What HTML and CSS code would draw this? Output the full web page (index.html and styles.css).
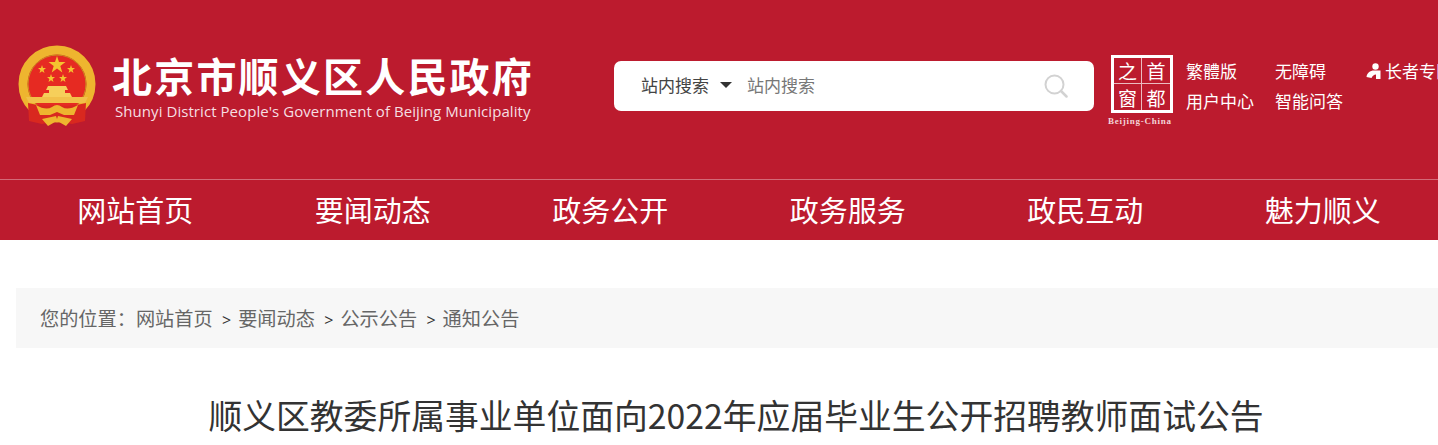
FILE: index.html
```html
<!DOCTYPE html>
<html lang="zh-CN">
<head>
    <meta charset="UTF-8">
    <meta name="viewport" content="width=device-width, initial-scale=1.0">
    <title>顺义区教委所属事业单位面向2022年应届毕业生公开招聘教师面试公告</title>
    <link rel="stylesheet" href="styles.css">
</head>
<body>
    <div class="header">
        <div class="top">
            <svg class="emblem" viewBox="0 0 80 84" aria-hidden="true">
                <circle cx="39" cy="39" r="34" fill="#e62a22" stroke="#eeb52f" stroke-width="9"/>
                <circle cx="39" cy="39" r="29" fill="none" stroke="#c98f1f" stroke-width="1"/>
                <polygon points="39,11 41,17 47.500,17 42.300,21 44.300,27.500 39,23.500 33.700,27.500 35.700,21 30.500,17 37,17" fill="#f4c430"/>
                <polygon points="24,20 25,23 28,23 25.600,25 26.500,28 24,26.200 21.500,28 22.400,25 20,23 23,23" fill="#f4c430"/>
                <polygon points="53,20 54,23 57,23 54.600,25 55.500,28 53,26.200 50.500,28 51.400,25 49,23 52,23" fill="#f4c430"/>
                <polygon points="33,29 34,32 37,32 34.600,34 35.500,37 33,35.200 30.500,37 31.400,34 29,32 32,32" fill="#f4c430"/>
                <polygon points="45,29 46,32 49,32 46.600,34 47.500,37 45,35.200 42.500,37 43.400,34 41,32 44,32" fill="#f4c430"/>
                <path d="M30 41 H48 L50 45 H47 V48 H52 L54 52 H24 L26 48 H31 V45 H28 Z" fill="#f6cf5a"/>
                <path d="M8 52 H70 L67 58 H11 Z" fill="#f2c04a"/>
                <path d="M10 58 Q24 62 39 60 Q54 62 68 58 L67 76 L54 79 L39 76 L24 79 L11 76 Z" fill="#d9281f"/>
                <path d="M18 60 Q28 66 34 62 Q39 58 44 62 Q50 66 60 60 L56 70 H46 L39 67 L32 70 H22 Z" fill="#eeb52f"/>
                <path d="M24 74 L38 71 L39 74 L40 71 L54 74 L48 81 L41 77 L37 77 L30 81 Z" fill="#eeb52f"/>
            </svg>
            <div class="logo-text">
                <div class="logo-cn">北京市顺义区人民政府</div>
                <div class="logo-en">Shunyi District People's Government of Beijing Municipality</div>
            </div>
            <div class="search">
                <span class="search-type">站内搜索</span>
                <span class="caret"></span>
                <span class="search-input">站内搜索</span>
                <svg class="search-icon" viewBox="0 0 24 24" aria-hidden="true">
                    <circle cx="10.500" cy="10.500" r="9" fill="none" stroke="#d2d2d2" stroke-width="2"/>
                    <path d="M17 17 L22.500 22.500" stroke="#d2d2d2" stroke-width="2.500" stroke-linecap="round"/>
                </svg>
            </div>
            <div class="stamp-wrap">
                <div class="stamp">
                    <span class="stamp-cell cell-a">之</span>
                    <span class="stamp-cell cell-b">首</span>
                    <span class="stamp-cell cell-c">窗</span>
                    <span class="stamp-cell cell-d">都</span>
                </div>
                <div class="stamp-label">Beijing-China</div>
            </div>
            <div class="quick-links">
                <a class="quick-link">繁體版</a>
                <a class="quick-link">无障碍</a>
                <a class="quick-link elder">
                    <svg class="elder-icon" viewBox="0 0 16 16" aria-hidden="true">
                        <circle cx="9.500" cy="3.500" r="3.200" fill="#fff"/>
                        <path d="M0.500 14 C1 10 4 7.500 8 7.500 L14.500 7.500 L14.500 16 L10 16 L10 11.500 C8 11.500 6.500 13 5.500 15 Z" fill="#fff"/>
                    </svg>长者专区
                </a>
                <a class="quick-link">用户中心</a>
                <a class="quick-link">智能问答</a>
            </div>
        </div>
        <div class="nav">
            <a class="nav-item">网站首页</a>
            <a class="nav-item">要闻动态</a>
            <a class="nav-item">政务公开</a>
            <a class="nav-item">政务服务</a>
            <a class="nav-item">政民互动</a>
            <a class="nav-item">魅力顺义</a>
        </div>
    </div>

    <div class="container">
        <div class="crumbs">
            <span>您的位置：</span><a>网站首页</a>
            <span class="sep">&gt;</span><a>要闻动态</a>
            <span class="sep">&gt;</span><a>公示公告</a>
            <span class="sep">&gt;</span><a>通知公告</a>
        </div>
        <h1 class="article-title">顺义区教委所属事业单位面向2022年应届毕业生公开招聘教师面试公告</h1>
    </div>
</body>
</html>
```

FILE: styles.css
```css
:root {
    --red: #bc1b2e;
    --text: #666;
}

html, body {
    overflow: hidden;
}

body {
    font-family: "Noto Sans CJK SC", "Open Sans", sans-serif;
    background-color: #fff;
    color: var(--text);
    margin: 0;
    width: 1438px;
    height: 445px;
}

.header {
    background-color: var(--red);
    color: #fff;
}

.top {
    display: flex;
    align-items: flex-start;
    height: 180px;
    box-sizing: border-box;
    padding: 45px 0 0 18px;
    border-bottom: 1px solid rgba(255,255,255,0.35);
    white-space: nowrap;
    overflow: hidden;
}

.emblem {
    width: 80px;
    height: 84px;
    flex: none;
    filter: blur(0.4px);
}

.logo-text {
    margin-left: 15px;
    width: 440px;
    flex: none;
}

.logo-cn {
    font-size: 40px;
    font-weight: 700;
    line-height: 46px;
    letter-spacing: 2.200px;
    margin: 7px 0 0 -1px;
}

.logo-en {
    font-family: "Open Sans", sans-serif;
    font-size: 15px;
    line-height: 20px;
    margin: 3px 0 0 2px;
    letter-spacing: 0.060px;
    color: #f6dfe2;
}

.search {
    display: flex;
    align-items: center;
    width: 480px;
    height: 50px;
    margin: 16px 0 0 61px;
    padding: 0 26px 3px 27px;
    box-sizing: border-box;
    background: #fff;
    border-radius: 7px;
    flex: none;
    font-size: 17px;
}

.search-type {
    color: #444;
}

.caret {
    width: 0;
    height: 0;
    margin: 0 15px 0 11px;
    border-left: 6px solid transparent;
    border-right: 6px solid transparent;
    border-top: 6px solid #333;
}

.search-input {
    color: #777;
    flex: 1;
}

.search-icon {
    width: 24px;
    height: 24px;
    margin-top: 3px;
}

.stamp-wrap {
    width: 66px;
    margin: 10px 0 0 14px;
    flex: none;
}

.stamp {
    display: grid;
    grid-template-columns: 1fr 1fr;
    grid-template-rows: 1fr 1fr;
    width: 62px;
    height: 58px;
    margin-left: 3px;
    box-sizing: border-box;
    border: 3px solid #fff;
}

.stamp-cell {
    display: flex;
    align-items: center;
    justify-content: center;
    font-size: 19px;
    line-height: 1;
    border-color: rgba(255,255,255,0.7);
    border-style: solid;
    border-width: 0;
}

.cell-a, .cell-c {
    border-right-width: 1px;
}

.cell-a, .cell-b {
    border-bottom-width: 1px;
}

.stamp-label {
    font-family: "Liberation Serif", serif;
    font-size: 9px;
    font-weight: 700;
    line-height: 12px;
    margin-top: 2px;
    letter-spacing: 0.750px;
    color: #f3d3d7;
}

.quick-links {
    display: grid;
    grid-template-columns: 89px 91px auto;
    grid-auto-rows: 30px;
    margin: 11px 0 0 12px;
    font-size: 17px;
    line-height: 30px;
    flex: none;
}

.elder {
    display: flex;
    align-items: center;
}

.elder-icon {
    width: 16px;
    height: 16px;
    margin-right: 3px;
}

.nav {
    display: flex;
    height: 59px;
    padding-left: 16.500px;
    padding-top: 0;
    padding-bottom: 1px;
}

.nav-item {
    width: 237.500px;
    flex: none;
    text-align: center;
    font-size: 29px;
    line-height: 59px;
}

.container {
    padding: 48px 0 0 16px;
}

.crumbs {
    width: 1440px;
    height: 60px;
    line-height: 60px;
    box-sizing: border-box;
    padding-left: 24px;
    background-color: #f7f7f7;
    font-size: 19.200px;
    white-space: nowrap;
}

.sep {
    font-family: "Open Sans", sans-serif;
    font-size: 16px;
    color: #333;
    margin: 0 7px 0 5px;
}

.article-title {
    width: 1440px;
    margin: 42px 0 0;
    font-size: 33.800px;
    font-weight: 400;
    line-height: 50px;
    text-align: center;
    color: #333;
    white-space: nowrap;
}
```
